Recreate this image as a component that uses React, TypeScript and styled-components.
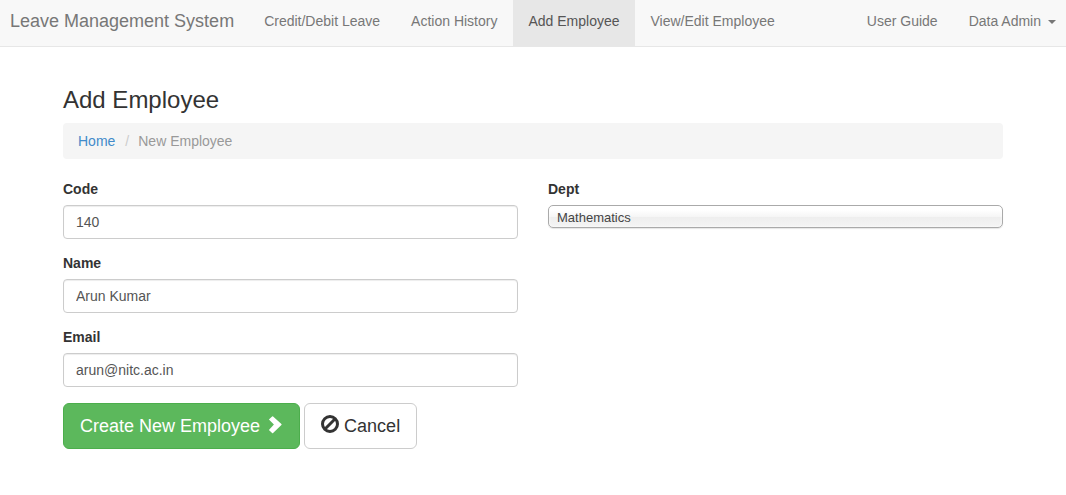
import React from "react";
import styled, { createGlobalStyle } from "styled-components";

const GlobalStyle = createGlobalStyle`
  *, *::before, *::after { box-sizing: border-box; }
  body {
    margin: 0;
    background: #fff;
    color: #333;
    font-family: "Liberation Sans", Helvetica, Arial, sans-serif;
    font-size: 14px;
    line-height: 20px;
  }
  input, select, button { font-family: inherit; }
`;

const Navbar = styled.nav`
  display: flex;
  flex-wrap: wrap;
  padding-left: 10px;
  background: #f8f8f8;
  border-bottom: 1px solid #e7e7e7;
  white-space: nowrap;
`;

const Brand = styled.a`
  padding: 11px 15px 15px 0;
  color: #777;
  font-size: 18px;
  text-decoration: none;
`;

const NavList = styled.ul<{ $end?: boolean }>`
  display: flex;
  gap: 1px;
  margin: 0;
  margin-left: ${({ $end }) => ($end ? "auto" : "0")};
  padding: 0;
  padding-right: ${({ $end }) => ($end ? "10px" : "0")};
  list-style: none;
`;

const NavLink = styled.a<{ $active?: boolean; $last?: boolean }>`
  display: flex;
  align-items: center;
  gap: 7px;
  padding: 11px ${({ $last }) => ($last ? "0" : "15px")} 15px 15px;
  color: ${({ $active }) => ($active ? "#555" : "#777")};
  background: ${({ $active }) => ($active ? "#e7e7e7" : "transparent")};
  text-decoration: none;
`;

const Caret = styled.span`
  margin-top: 2px;
  border-top: 4px solid currentColor;
  border-right: 4px solid transparent;
  border-left: 4px solid transparent;
`;

const Container = styled.main`
  max-width: 970px;
  margin: 0 auto;
  padding: 40px 15px;
`;

const Title = styled.h3`
  margin: 0 0 10px;
  font-size: 24px;
  font-weight: 500;
  line-height: 26px;
`;

const Breadcrumb = styled.ol`
  display: flex;
  margin: 0 0 20px;
  padding: 8px 15px;
  background: #f5f5f5;
  border-radius: 4px;
  list-style: none;
`;

const Crumb = styled.li`
  color: #999;

  & + &::before {
    content: "/";
    padding: 0 9px 0 10px;
    color: #ccc;
  }
`;

const CrumbLink = styled.a`
  color: #428bca;
  text-decoration: none;
`;

const Columns = styled.div`
  display: grid;
  grid-template-columns: 1fr 1fr;
  gap: 30px;
`;

const Fields = styled.div`
  display: flex;
  flex-direction: column;
  gap: 14px;
`;

const Field = styled.div`
  display: flex;
  flex-direction: column;
`;

const Label = styled.label`
  margin-bottom: 6px;
  font-weight: bold;
`;

const TextInput = styled.input`
  width: 100%;
  height: 34px;
  padding: 6px 12px;
  color: #555;
  font-size: 14px;
  background: #fff;
  border: 1px solid #ccc;
  border-radius: 4px;
  box-shadow: inset 0 1px 1px rgba(0, 0, 0, 0.075);
`;

const Select = styled.select`
  appearance: none;
  width: 100%;
  height: 23px;
  padding: 2px 8px 0;
  color: #444;
  font-size: 13px;
  background: linear-gradient(#fff 20%, #f6f6f6 50%, #eee 52%, #f4f4f4 100%);
  border: 1px solid #aaa;
  border-radius: 5px;
  box-shadow: inset 0 0 3px #fff, 0 1px 1px rgba(0, 0, 0, 0.1);
`;

const Actions = styled.div`
  display: flex;
  gap: 4px;
  margin-top: 16px;
`;

const Button = styled.button<{ $primary?: boolean }>`
  display: flex;
  align-items: center;
  gap: 5px;
  height: 46px;
  padding: 0 16px;
  color: ${({ $primary }) => ($primary ? "#fff" : "#333")};
  font-size: 18px;
  background: ${({ $primary }) => ($primary ? "#5cb85c" : "#fff")};
  border: 1px solid ${({ $primary }) => ($primary ? "#4cae4c" : "#ccc")};
  border-radius: 6px;
  cursor: pointer;
`;

const Icon = styled.svg`
  width: 18px;
  height: 18px;
  margin-bottom: 4px;
  overflow: visible;
`;

const textFields = [
  { id: "code", label: "Code", type: "text", value: "140" },
  { id: "name", label: "Name", type: "text", value: "Arun Kumar" },
  { id: "email", label: "Email", type: "email", value: "arun@nitc.ac.in" },
];

export default function App() {
  return (
    <>
      <GlobalStyle />
      <Navbar>
        <Brand href="#">Leave Management System</Brand>
        <NavList>
          <li><NavLink href="#">Credit/Debit Leave</NavLink></li>
          <li><NavLink href="#">Action History</NavLink></li>
          <li><NavLink href="#" $active aria-current="page">Add Employee</NavLink></li>
          <li><NavLink href="#">View/Edit Employee</NavLink></li>
        </NavList>
        <NavList $end>
          <li><NavLink href="#">User Guide</NavLink></li>
          <li><NavLink href="#" $last>Data Admin <Caret /></NavLink></li>
        </NavList>
      </Navbar>
      <Container>
        <Title>Add Employee</Title>
        <Breadcrumb>
          <Crumb><CrumbLink href="#">Home</CrumbLink></Crumb>
          <Crumb>New Employee</Crumb>
        </Breadcrumb>
        <form onSubmit={(e) => e.preventDefault()}>
          <Columns>
            <Fields>
              {textFields.map((f) => (
                <Field key={f.id}>
                  <Label htmlFor={f.id}>{f.label}</Label>
                  <TextInput id={f.id} type={f.type} defaultValue={f.value} />
                </Field>
              ))}
            </Fields>
            <Field>
              <Label htmlFor="dept">Dept</Label>
              <Select id="dept" defaultValue="Mathematics">
                <option>Mathematics</option>
              </Select>
            </Field>
          </Columns>
          <Actions>
            <Button type="submit" $primary>
              Create New Employee
              <Icon viewBox="0 0 18 18" aria-hidden="true">
                <path d="M7.1 1.4 Q7.6 1 8.1 1.4 L16.4 9.1 Q16.9 9.6 16.4 10.1 L8.1 18 Q7.6 18.4 7.1 18 L3.9 15 L8.9 9.6 L3.9 4.6 Z" fill="currentColor" />
              </Icon>
            </Button>
            <Button type="button">
              <Icon viewBox="0 0 18 18" aria-hidden="true">
                <circle cx="9" cy="9" r="7.5" fill="none" stroke="currentColor" strokeWidth="3" />
                <path d="M3.8 14.2 L14.2 3.8" stroke="currentColor" strokeWidth="3" />
              </Icon>
              Cancel
            </Button>
          </Actions>
        </form>
      </Container>
    </>
  );
}
